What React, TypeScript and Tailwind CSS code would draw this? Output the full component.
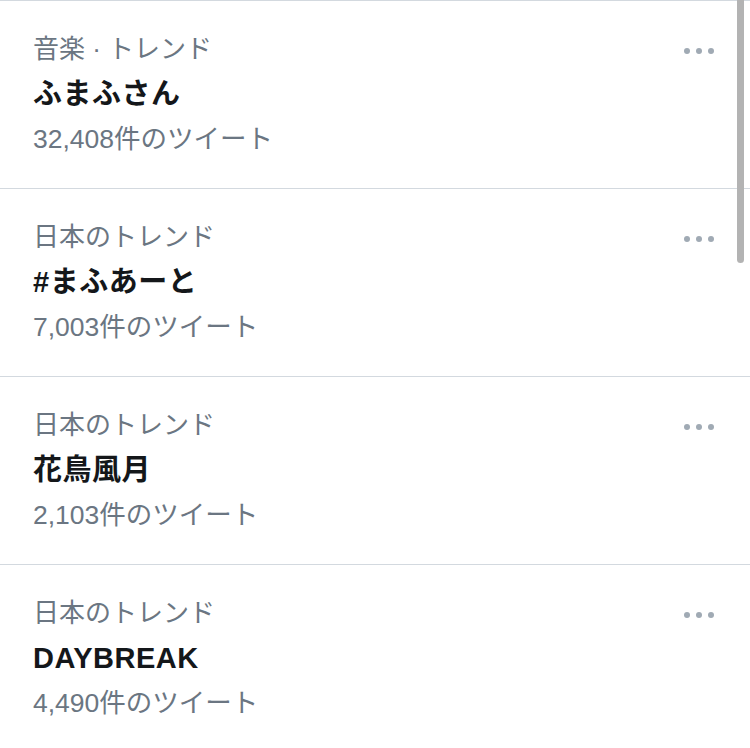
const trends = [
  { label: '音楽 · トレンド', title: 'ふまふさん', count: '32,408件のツイート' },
  { label: '日本のトレンド', title: '#まふあーと', count: '7,003件のツイート' },
  { label: '日本のトレンド', title: '花鳥風月', count: '2,103件のツイート' },
  { label: '日本のトレンド', title: 'DAYBREAK', count: '4,490件のツイート' },
];

function MoreDots() {
  return (
    <div className="flex items-center gap-[6px] pt-[2px]">
      <span className="w-[6px] h-[6px] rounded-full bg-[#a0aab4]" />
      <span className="w-[6px] h-[6px] rounded-full bg-[#a0aab4]" />
      <span className="w-[6px] h-[6px] rounded-full bg-[#a0aab4]" />
    </div>
  );
}

export default function App() {
  return (
    <div
      className="relative w-[750px] h-[748px] overflow-hidden bg-white"
      style={{ fontFamily: '"Liberation Sans", "Noto Sans CJK JP", sans-serif' }}
    >
      {trends.map((t, i) => (
        <div
          key={i}
          className="flex h-[188px] border-t border-[#d3d9df] pl-[33px] pr-[36px] pt-[26px]"
        >
          <div className="flex-1 flex flex-col">
            <div className="text-[26px] leading-[45px] text-[#6b7682]">{t.label}</div>
            <div className="text-[29px] leading-[45px] font-bold tracking-[0.5px] text-[#14171a]">
              {t.title}
            </div>
            <div className="text-[26.5px] leading-[45px] text-[#6b7682]">{t.count}</div>
          </div>
          <div className="h-[45px] flex items-center">
            <MoreDots />
          </div>
        </div>
      ))}

      {/* scrollbar thumb */}
      <div className="absolute right-[6px] top-0 w-[7px] h-[263px] rounded-b-full bg-[#b3b3b3]" />
    </div>
  );
}
